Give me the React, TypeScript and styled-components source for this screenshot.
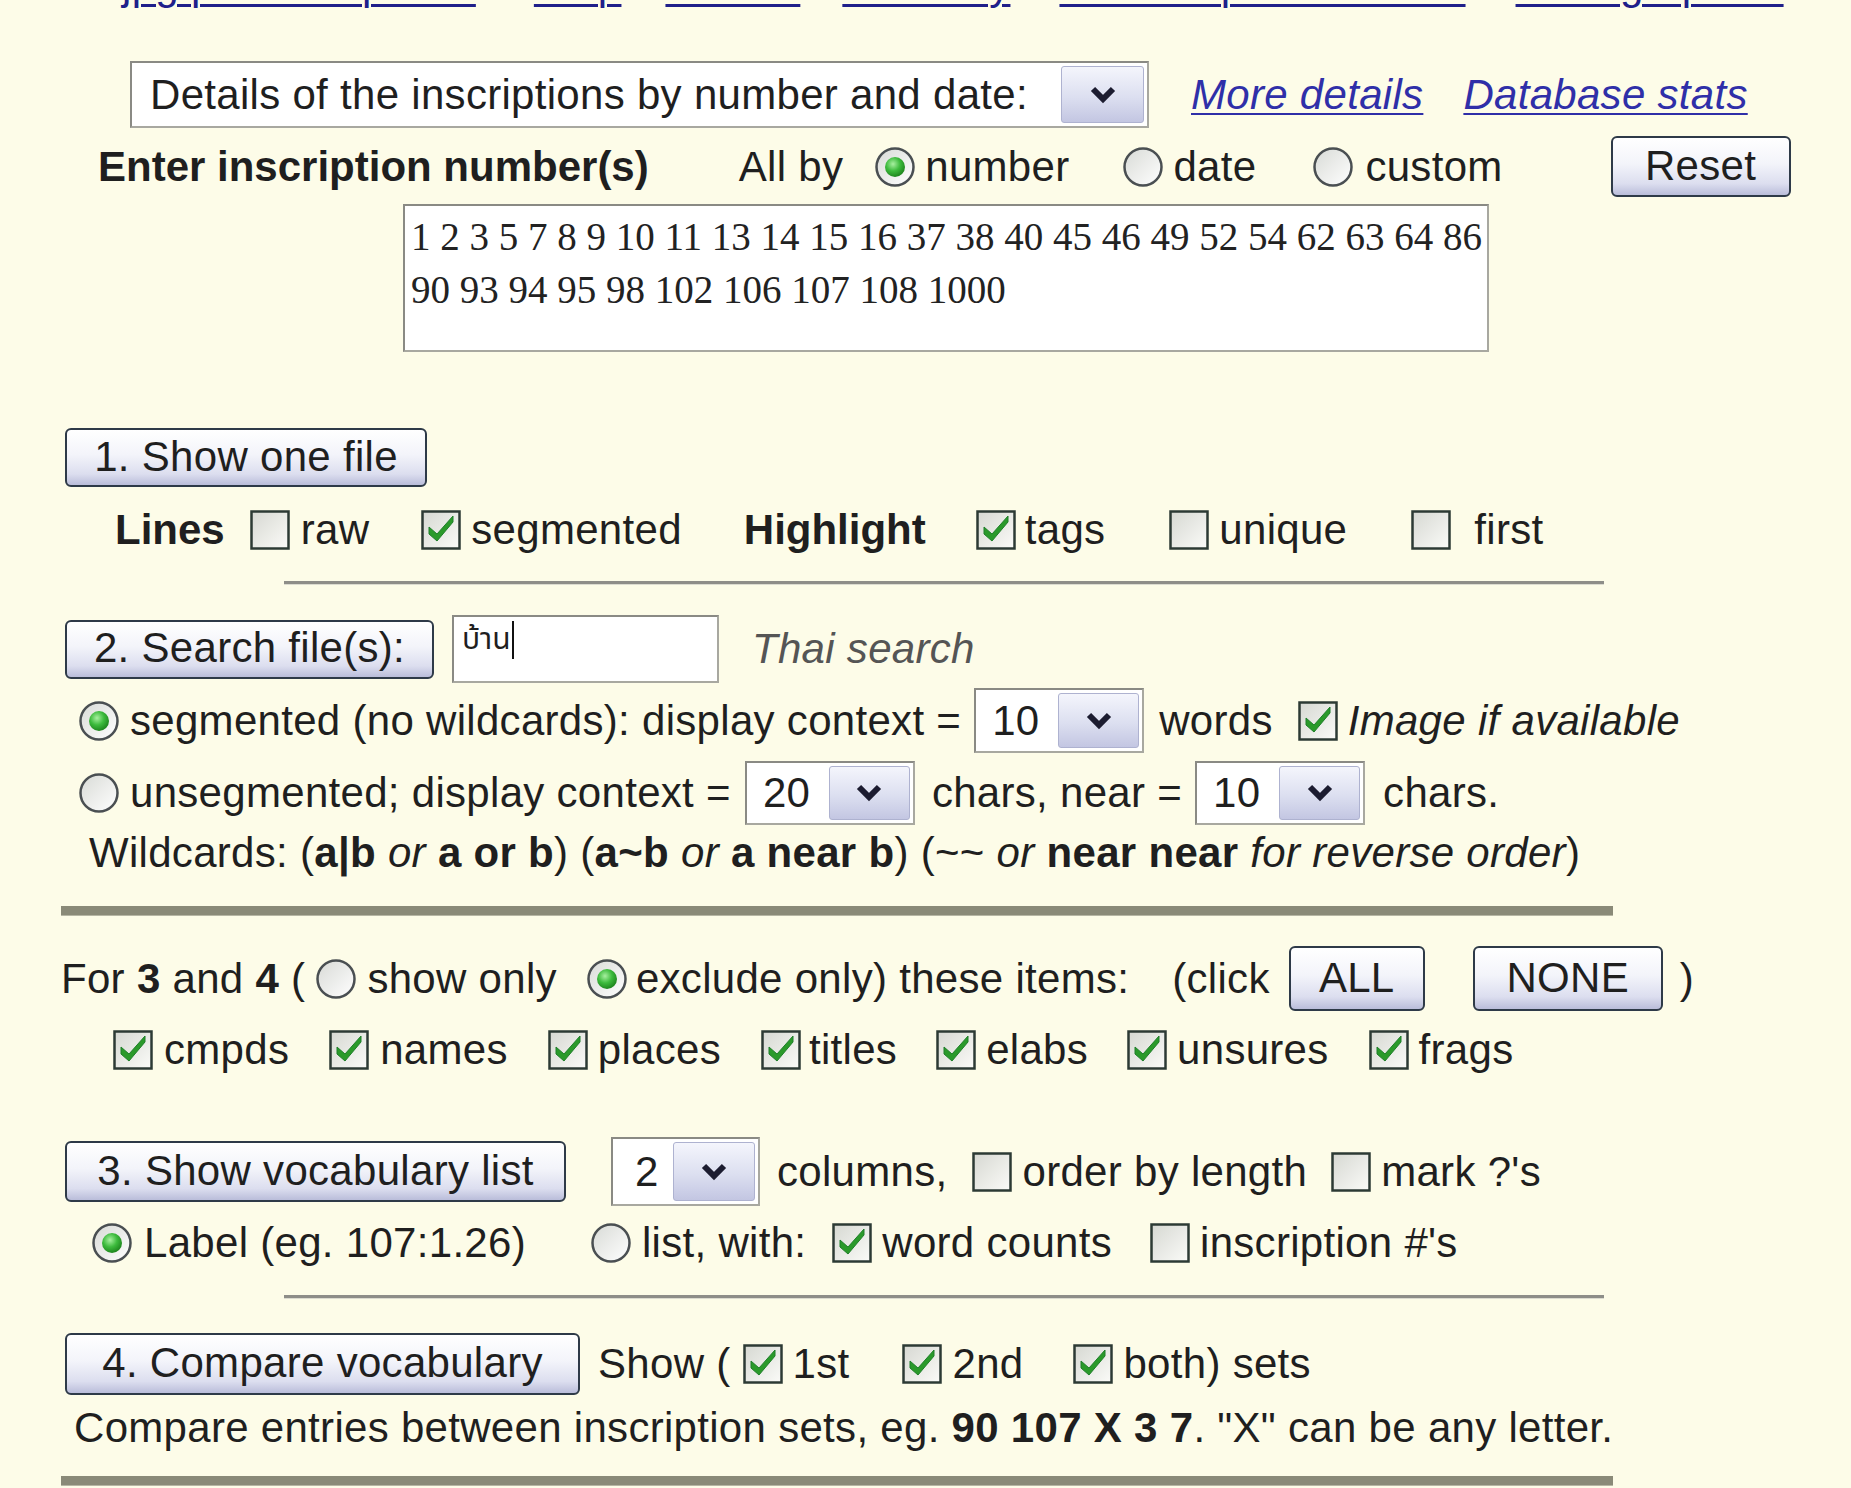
import React from 'react';
import styled, { createGlobalStyle } from 'styled-components';

const GlobalStyle = createGlobalStyle`
  html, body {
    margin: 0;
    padding: 0;
    background: #fdfce8;
  }
  body {
    font-family: "Liberation Sans", Arial, sans-serif;
    font-size: 42px;
    letter-spacing: 0.3px;
    color: #1f1f1f;
    overflow: hidden;
  }
`;

const Page = styled.div`
  width: 1851px;
  height: 1488px;
  overflow: hidden;
  display: flex;
  flex-direction: column;
`;

const Row = styled.div<{ $top: number; $h: number; $indent?: number }>`
  display: flex;
  align-items: center;
  flex-shrink: 0;
  margin-top: ${p => p.$top}px;
  height: ${p => p.$h}px;
  padding-left: ${p => p.$indent ?? 0}px;
  white-space: nowrap;
`;

const NavRow = styled(Row)`
  align-items: flex-end;
`;

const NavLink = styled.a<{ $ml: number }>`
  margin-left: ${p => p.$ml}px;
  color: #20208a;
  text-decoration: underline;
  text-decoration-thickness: 3px;
  text-underline-offset: 5px;
  line-height: 47px;
`;

const Text = styled.span<{ $ml?: number; $bold?: boolean; $italic?: boolean; $muted?: boolean }>`
  margin-left: ${p => p.$ml ?? 0}px;
  font-weight: ${p => (p.$bold ? 700 : 400)};
  font-style: ${p => (p.$italic ? 'italic' : 'normal')};
  color: ${p => (p.$muted ? '#555555' : '#1f1f1f')};
  letter-spacing: ${p => (p.$bold ? '0' : '0.3px')};
`;

const Strong = styled.b`
  font-weight: 700;
`;

const Em = styled.i`
  font-style: italic;
`;

const LinkText = styled.a<{ $ml: number }>`
  margin-left: ${p => p.$ml}px;
  color: #2f2fa8;
  font-style: italic;
  text-decoration: underline;
  text-decoration-thickness: 2px;
  text-underline-offset: 4px;
`;

const XpButton = styled.button<{ $w: number; $h: number; $ml?: number }>`
  box-sizing: border-box;
  width: ${p => p.$w}px;
  height: ${p => p.$h}px;
  margin-left: ${p => p.$ml ?? 0}px;
  padding: 0 0 2px;
  border: 2px solid #2e3a48;
  border-radius: 6px;
  background: linear-gradient(to bottom, #ffffff 0%, #f3f4fa 45%, #dcdeef 80%, #babdda 100%);
  font-family: "Liberation Sans", Arial, sans-serif;
  font-size: 42px;
  letter-spacing: 0.3px;
  color: #1f1f1f;
  text-align: center;
  white-space: nowrap;
`;

const SelectBox = styled.div<{ $w: number; $h: number; $ml?: number; $pad?: number }>`
  box-sizing: border-box;
  display: flex;
  align-items: stretch;
  width: ${p => p.$w}px;
  height: ${p => p.$h}px;
  margin-left: ${p => p.$ml ?? 0}px;
  padding: 3px 3px 3px ${p => p.$pad ?? 16}px;
  background: #ffffff;
  border: 2px solid #a8a8a0;
  border-top-color: #8a8a84;
  border-left-color: #8a8a84;
`;

const SelectValue = styled.span`
  flex: 1;
  display: flex;
  align-items: center;
  overflow: hidden;
`;

const SelectArrow = styled.span<{ $w: number }>`
  box-sizing: border-box;
  width: ${p => p.$w}px;
  display: flex;
  align-items: center;
  justify-content: center;
  border: 1px solid #aeb2d0;
  border-radius: 3px;
  background: linear-gradient(to bottom, #f4f5fc 0%, #dcdff0 55%, #c3c6e2 100%);
`;

const TextInput = styled.div<{ $w: number; $h: number; $ml: number }>`
  box-sizing: border-box;
  width: ${p => p.$w}px;
  height: ${p => p.$h}px;
  margin-left: ${p => p.$ml}px;
  padding: 4px 8px;
  background: #ffffff;
  border: 2px solid #a8a8a0;
  border-top-color: #8a8a84;
  border-left-color: #8a8a84;
  font-family: "Noto Sans Thai", "Loma", "Garuda", "Tlwg Typo", "DejaVu Sans", sans-serif;
  font-size: 30px;
  letter-spacing: 0;
  line-height: 38px;
  display: flex;
  align-items: flex-start;
`;

const Caret = styled.span`
  display: inline-block;
  width: 2px;
  height: 38px;
  margin-left: 1px;
  background: #111;
`;

const NumbersBox = styled.div`
  box-sizing: border-box;
  flex-shrink: 0;
  width: 1086px;
  height: 148px;
  margin-top: 7px;
  margin-left: 403px;
  padding: 4px 6px;
  background: #ffffff;
  border: 2px solid #a8a8a0;
  border-top-color: #8a8a84;
  border-left-color: #8a8a84;
  font-family: "Liberation Serif", "Times New Roman", serif;
  font-size: 39px;
  letter-spacing: 0;
  line-height: 53px;
  color: #222;
  white-space: nowrap;
`;

const Rule = styled.div<{ $top: number; $left: number; $w: number; $thick?: boolean }>`
  flex-shrink: 0;
  margin-top: ${p => p.$top}px;
  margin-left: ${p => p.$left}px;
  width: ${p => p.$w}px;
  height: ${p => (p.$thick ? 9 : 3)}px;
  background: ${p => (p.$thick ? '#8a8a78' : '#8e8e88')};
  border-bottom: 1px solid ${p => (p.$thick ? '#b6b6a4' : '#dcdcd0')};
`;

const BoxWrap = styled.span<{ $ml?: number }>`
  display: inline-flex;
  margin-left: ${p => p.$ml ?? 0}px;
  flex-shrink: 0;
`;

const Checkbox: React.FC<{ checked?: boolean; ml?: number }> = ({ checked, ml }) => (
  <BoxWrap $ml={ml}>
    <svg width="40" height="40" viewBox="0 0 40 40">
      <defs>
        <linearGradient id="cbfill" x1="0" y1="0" x2="1" y2="1">
          <stop offset="0" stopColor="#d6d8d2" />
          <stop offset="1" stopColor="#fbfbf8" />
        </linearGradient>
      </defs>
      <rect x="1.5" y="1.5" width="37" height="37" fill="url(#cbfill)" stroke="#2c3a34" strokeWidth="2.5" />
      {checked && (
        <path d="M8 17 L8 24 L16 31 L32 12 L32 6 L16 24 Z" fill="#2a9a2a" stroke="#1f7f2a" strokeWidth="1" />
      )}
    </svg>
  </BoxWrap>
);

const Radio: React.FC<{ checked?: boolean; ml?: number }> = ({ checked, ml }) => (
  <BoxWrap $ml={ml}>
    <svg width="42" height="42" viewBox="0 0 42 42">
      <defs>
        <linearGradient id="rdfill" x1="0" y1="0" x2="1" y2="1">
          <stop offset="0" stopColor="#d8dad6" />
          <stop offset="1" stopColor="#ffffff" />
        </linearGradient>
        <radialGradient id="rddot" cx="0.4" cy="0.35" r="0.7">
          <stop offset="0" stopColor="#a8f0a0" />
          <stop offset="0.5" stopColor="#3dbb3d" />
          <stop offset="1" stopColor="#1a7f1a" />
        </radialGradient>
      </defs>
      <circle cx="21" cy="21" r="18.5" fill="url(#rdfill)" stroke="#4a4f52" strokeWidth="2.5" />
      {checked && <circle cx="21" cy="21" r="10" fill="url(#rddot)" />}
    </svg>
  </BoxWrap>
);

const Chevron: React.FC = () => (
  <svg width="26" height="18" viewBox="0 0 26 18">
    <path d="M3 3 L13 13 L23 3" fill="none" stroke="#1c1c30" strokeWidth="6" />
  </svg>
);

const Select: React.FC<{ value: string; w: number; h: number; ml?: number; pad?: number; arrow: number }> = ({
  value,
  w,
  h,
  ml,
  pad,
  arrow,
}) => (
  <SelectBox $w={w} $h={h} $ml={ml} $pad={pad}>
    <SelectValue>{value}</SelectValue>
    <SelectArrow $w={arrow}>
      <Chevron />
    </SelectArrow>
  </SelectBox>
);

const App: React.FC = () => {
  return (
    <Page>
      <GlobalStyle />

      <NavRow $top={-36} $h={44}>
        <NavLink $ml={122}>jpg/pdf inscriptions</NavLink>
        <NavLink $ml={58}>Help</NavLink>
        <NavLink $ml={44}>Search</NavLink>
        <NavLink $ml={42}>Glossary</NavLink>
        <NavLink $ml={49}>Thai script translation</NavLink>
        <NavLink $ml={50}>Bibliographies</NavLink>
      </NavRow>

      <Row $top={53} $h={67} $indent={130}>
        <Select value="Details of the inscriptions by number and date:" w={1019} h={67} pad={18} arrow={83} />
        <LinkText $ml={42}>More details</LinkText>
        <LinkText $ml={40}>Database stats</LinkText>
      </Row>

      <Row $top={8} $h={61} $indent={98}>
        <Text $bold>Enter inscription number(s)</Text>
        <Text $ml={90}>All by</Text>
        <Radio checked ml={31} />
        <Text $ml={9}>number</Text>
        <Radio ml={53} />
        <Text $ml={9}>date</Text>
        <Radio ml={56} />
        <Text $ml={11}>custom</Text>
        <XpButton $w={180} $h={61} $ml={108}>Reset</XpButton>
      </Row>

      <NumbersBox>
        <div>1 2 3 5 7 8 9 10 11 13 14 15 16 37 38 40 45 46 49 52 54 62 63 64 86</div>
        <div>90 93 94 95 98 102 106 107 108 1000</div>
      </NumbersBox>

      <Row $top={76} $h={59} $indent={65}>
        <XpButton $w={362} $h={59}>1. Show one file</XpButton>
      </Row>

      <Row $top={18} $h={50} $indent={115}>
        <Text $bold>Lines</Text>
        <Checkbox ml={25} />
        <Text $ml={11}>raw</Text>
        <Checkbox checked ml={52} />
        <Text $ml={10}>segmented</Text>
        <Text $ml={62} $bold>Highlight</Text>
        <Checkbox checked ml={50} />
        <Text $ml={9}>tags</Text>
        <Checkbox ml={64} />
        <Text $ml={10}>unique</Text>
        <Checkbox ml={64} />
        <Text $ml={23}>first</Text>
      </Row>

      <Rule $top={26} $left={284} $w={1320} />

      <Row $top={30} $h={68} $indent={65}>
        <XpButton $w={369} $h={59}>2. Search file(s):</XpButton>
        <TextInput $w={267} $h={68} $ml={18}>
          บ้าน
          <Caret />
        </TextInput>
        <Text $ml={33} $italic $muted>Thai search</Text>
      </Row>

      <Row $top={5} $h={65} $indent={78}>
        <Radio checked />
        <Text $ml={10}>segmented (no wildcards): display context =</Text>
        <Select value="10" w={170} h={65} ml={13} arrow={81} />
        <Text $ml={15}>words</Text>
        <Checkbox checked ml={25} />
        <Text $ml={10} $italic>Image if available</Text>
      </Row>

      <Row $top={8} $h={64} $indent={78}>
        <Radio />
        <Text $ml={10}>unsegmented; display context =</Text>
        <Select value="20" w={170} h={64} ml={14} arrow={81} />
        <Text $ml={17}>chars, near =</Text>
        <Select value="10" w={170} h={64} ml={13} arrow={81} />
        <Text $ml={18}>chars.</Text>
      </Row>

      <Row $top={6} $h={44} $indent={89}>
        <Text>
          Wildcards: (<Strong>a|b</Strong> <Em>or</Em> <Strong>a or b</Strong>) (<Strong>a~b</Strong> <Em>or</Em>{' '}
          <Strong>a near b</Strong>) (~~ <Em>or</Em> <Strong>near near</Strong> <Em>for reverse order</Em>)
        </Text>
      </Row>

      <Rule $top={31} $left={61} $w={1552} $thick />

      <Row $top={30} $h={65} $indent={61}>
        <Text>
          For <Strong>3</Strong> and <Strong>4</Strong> (
        </Text>
        <Radio ml={10} />
        <Text $ml={10}>show only</Text>
        <Radio checked ml={29} />
        <Text $ml={8}>exclude only) these items:</Text>
        <Text $ml={43}>(click</Text>
        <XpButton $w={136} $h={65} $ml={19}>ALL</XpButton>
        <XpButton $w={190} $h={65} $ml={48}>NONE</XpButton>
        <Text $ml={17}>)</Text>
      </Row>

      <Row $top={14} $h={50} $indent={113}>
        <Checkbox checked />
        <Text $ml={11}>cmpds</Text>
        <Checkbox checked ml={40} />
        <Text $ml={11}>names</Text>
        <Checkbox checked ml={40} />
        <Text $ml={10}>places</Text>
        <Checkbox checked ml={40} />
        <Text $ml={8}>titles</Text>
        <Checkbox checked ml={39} />
        <Text $ml={10}>elabs</Text>
        <Checkbox checked ml={39} />
        <Text $ml={10}>unsures</Text>
        <Checkbox checked ml={40} />
        <Text $ml={10}>frags</Text>
      </Row>

      <Row $top={62} $h={69} $indent={65}>
        <XpButton $w={501} $h={61}>3. Show vocabulary list</XpButton>
        <Select value="2" w={149} h={69} ml={45} pad={22} arrow={82} />
        <Text $ml={17}>columns,</Text>
        <Checkbox ml={25} />
        <Text $ml={10}>order by length</Text>
        <Checkbox ml={24} />
        <Text $ml={10}>mark ?'s</Text>
      </Row>

      <Row $top={12} $h={50} $indent={91}>
        <Radio checked />
        <Text $ml={11}>Label (eg. 107:1.26)</Text>
        <Radio ml={64} />
        <Text $ml={10}>list, with:</Text>
        <Checkbox checked ml={26} />
        <Text $ml={10}>word counts</Text>
        <Checkbox ml={38} />
        <Text $ml={10}>inscription #'s</Text>
      </Row>

      <Rule $top={27} $left={284} $w={1320} />

      <Row $top={34} $h={62} $indent={65}>
        <XpButton $w={515} $h={62}>4. Compare vocabulary</XpButton>
        <Text $ml={18}>Show (</Text>
        <Checkbox checked ml={12} />
        <Text $ml={10}>1st</Text>
        <Checkbox checked ml={53} />
        <Text $ml={10}>2nd</Text>
        <Checkbox checked ml={50} />
        <Text $ml={10}>both) sets</Text>
      </Row>

      <Row $top={11} $h={44} $indent={74}>
        <Text>
          Compare entries between inscription sets, eg. <Strong>90 107 X 3 7</Strong>. "X" can be any letter.
        </Text>
      </Row>

      <Rule $top={26} $left={61} $w={1552} $thick />
    </Page>
  );
};

export default App;
